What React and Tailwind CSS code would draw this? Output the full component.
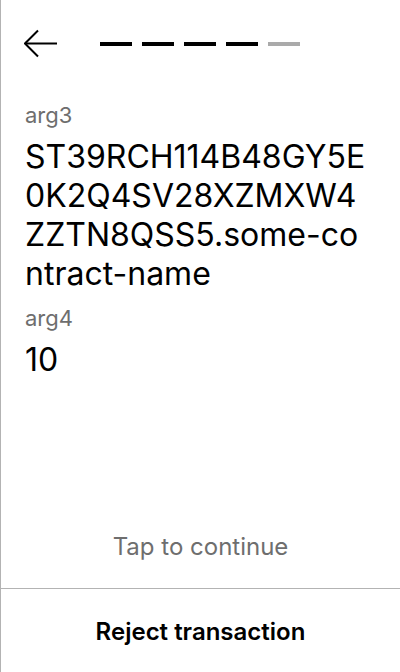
import React from "react";

const lines = ["ST39RCH114B48GY5E", "0K2Q4SV28XZMXW4", "ZZTN8QSS5.some-co", "ntract-name"];

export default function App() {
  return (
    <div
      className="flex h-[672px] w-[400px] flex-col border-l border-[#b3b3b3] bg-white text-black"
      style={{ fontFamily: "Inter, 'Noto Sans', sans-serif" }}
    >
      <div className="flex items-center pl-[23px] pt-[29px]">
        <svg width="34" height="30" viewBox="0 0 34 30" fill="none" stroke="black" strokeWidth="2">
          <path d="M1 14.5H33" />
          <path d="M14 1.5L1 14.5L14 27.5" />
        </svg>
        <div className="ml-[42px] flex gap-[10px]">
          <div className="h-[4px] w-[32px] bg-black" />
          <div className="h-[4px] w-[32px] bg-black" />
          <div className="h-[4px] w-[32px] bg-black" />
          <div className="h-[4px] w-[32px] bg-black" />
          <div className="h-[4px] w-[32px] bg-[#aaaaaa]" />
        </div>
      </div>

      <div className="flex flex-col gap-[11px] pl-6 pr-3 pt-[42px]">
        <div className="flex flex-col gap-[8px]">
          <div className="text-[22px] leading-[28px] text-[#6e6e6e]">arg3</div>
          <div className="text-[32px] leading-[39px]">
            {lines.map((l) => (
              <div key={l} className="whitespace-nowrap">
                {l}
              </div>
            ))}
          </div>
        </div>
        <div className="flex flex-col gap-[8px]">
          <div className="text-[22px] leading-[28px] text-[#6e6e6e]">arg4</div>
          <div className="text-[32px] leading-[39px]">10</div>
        </div>
      </div>

      <div className="flex-1" />

      <div className="pb-[26px] text-center text-[24px] leading-[30px] text-[#6e6e6e]">Tap to continue</div>
      <div className="flex h-[84px] items-center justify-center border-t border-[#b3b3b3] pt-[2px] text-[24px] font-semibold">
        Reject transaction
      </div>
    </div>
  );
}
